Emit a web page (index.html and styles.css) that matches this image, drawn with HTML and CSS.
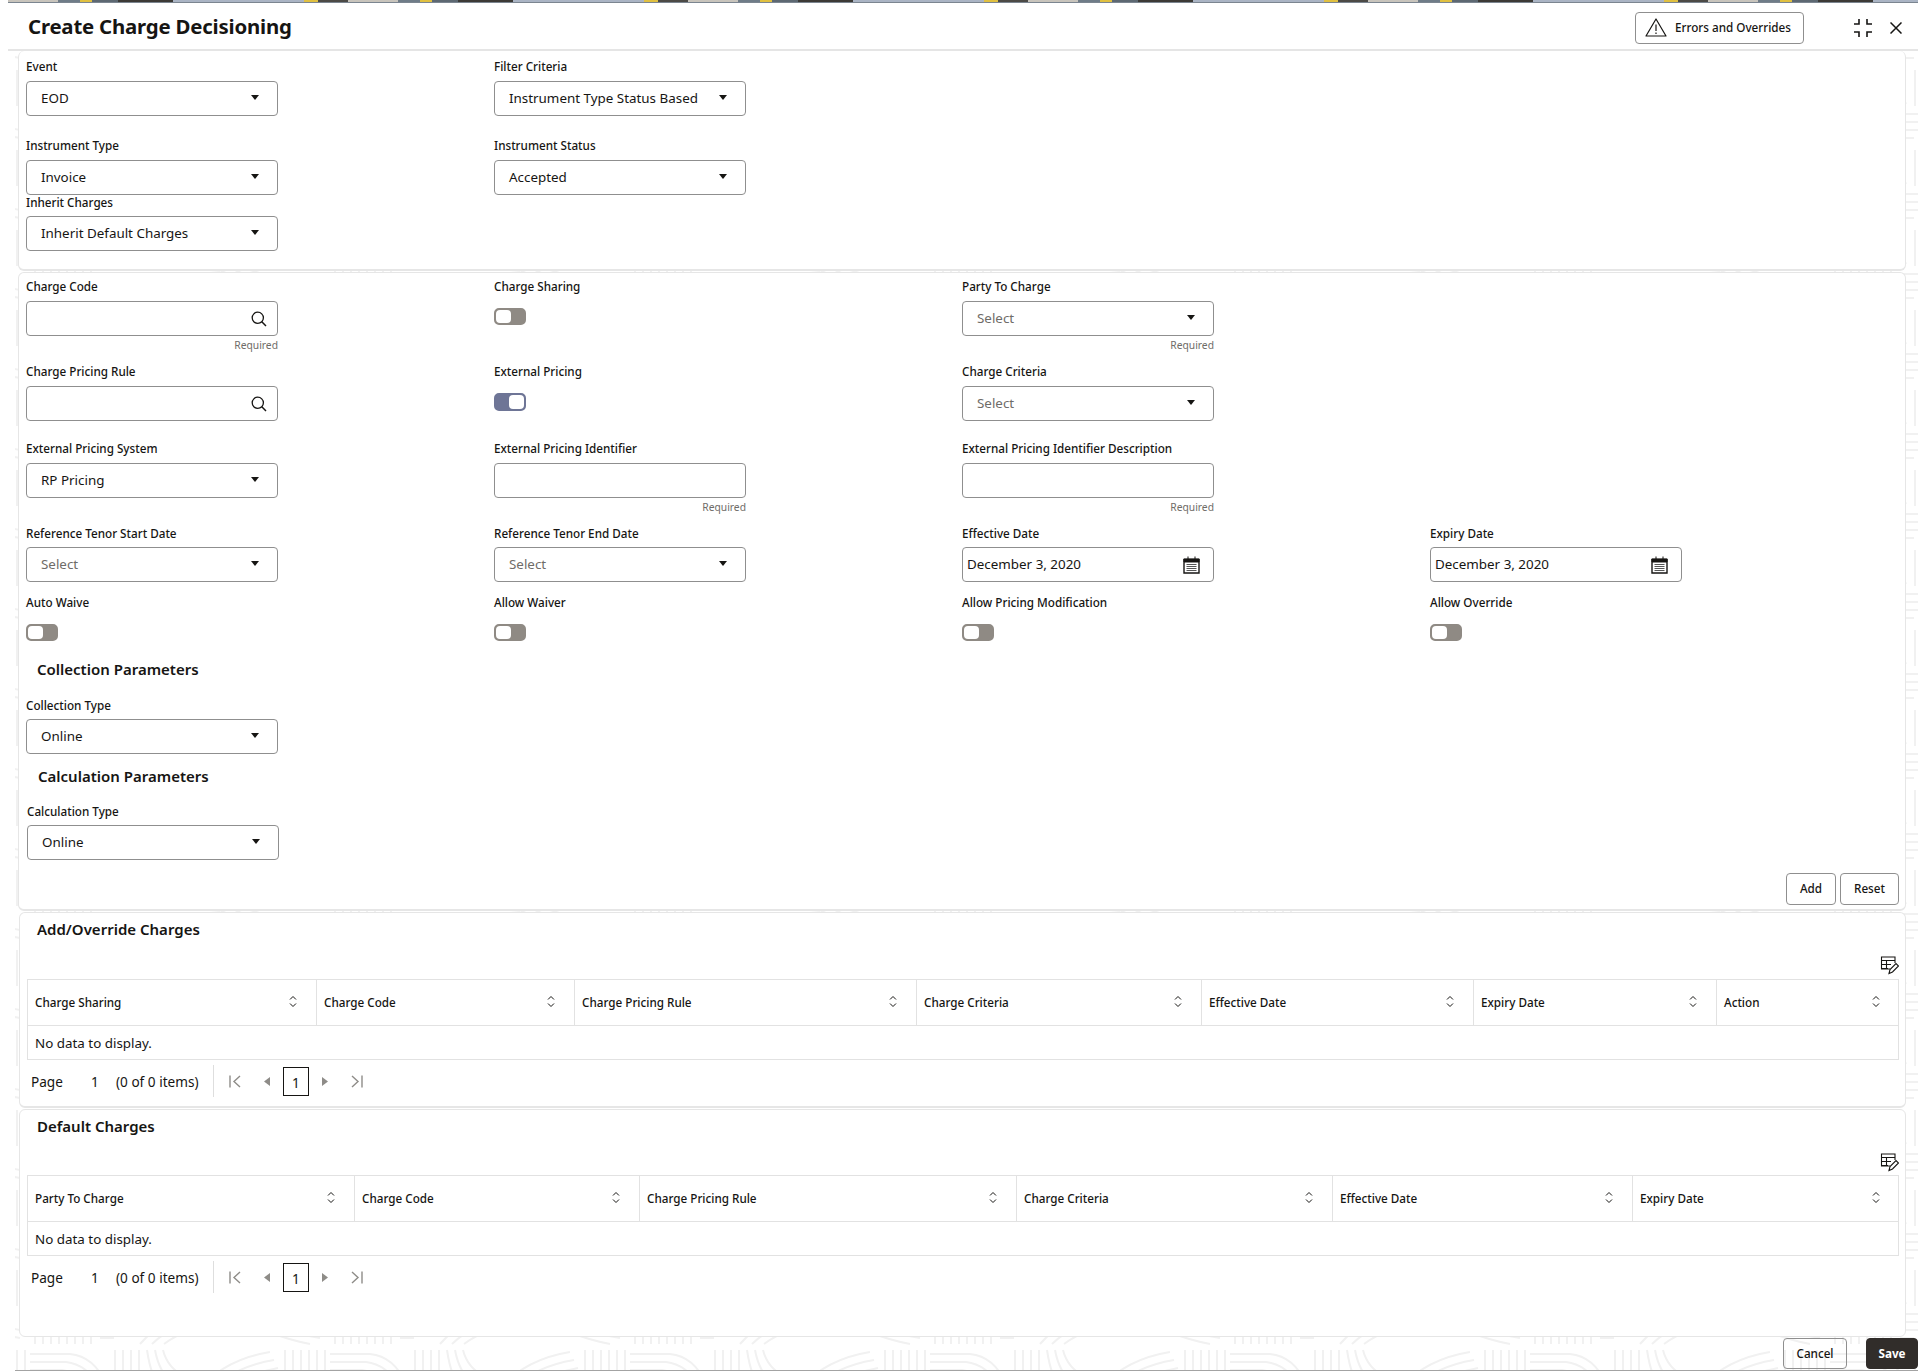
FILE: index.html
```html
<!DOCTYPE html>
<html lang="en">
<head>
<meta charset="utf-8">
<title>Create Charge Decisioning</title>
<link rel="stylesheet" href="styles.css">
</head>
<body>
<div class="page">
  <div class="strip"></div>
  <header class="dlg-head">
    <h1 class="title">Create Charge Decisioning</h1>
    <button class="btn btn-errors">
      <svg class="ic-warn" viewBox="0 0 22 19"><path d="M11 1 L21 18 H1 Z" fill="none" stroke="#161513" stroke-width="1.2" stroke-linejoin="round"/><path d="M11 6.5V13M11 14.5V16" stroke="#161513" stroke-width="1.2"/></svg>
      <span>Errors and Overrides</span>
    </button>
    <svg class="ic-shrink" viewBox="0 0 20 20"><path d="M6 1V6H1M14 1V6H19M6 19V14H1M14 19V14H19" fill="none" stroke="#161513" stroke-width="1.6"/></svg>
    <svg class="ic-close" viewBox="0 0 12 12"><path d="M0.5 0.5L11.5 11.5M11.5 0.5L0.5 11.5" stroke="#161513" stroke-width="1.5"/></svg>
  </header>

  <div class="body">
    <svg class="texture" aria-hidden="true">
      <defs>
        <pattern id="waves" width="300" height="80" patternUnits="userSpaceOnUse" x="15" y="59">
          <g fill="none" stroke="#f1f1f1" stroke-width="2">
            <path d="M5 0V34M13 0V34M21 0V34M29 0V34M37 0V34M45 0V34M53 0V34M61 0V34"/>
            <path d="M70 4H110M70 12H100M70 20H90M70 28H84"/>
            <path d="M110 34C130 10 160 4 190 2M122 34C140 16 165 10 190 8M134 34C150 22 170 16 190 14"/>
            <path d="M190 0C220 16 250 28 280 34M205 0C230 12 255 22 290 28M220 0C245 8 265 16 300 22"/>
            <path d="M0 44H40C60 46 70 60 76 74M0 52H36C52 54 62 64 68 76M0 60H32C44 62 54 68 60 78"/>
            <path d="M85 40V76M93 40V76M101 40V76M109 40V76M117 40C120 60 124 70 132 76M125 40C128 56 134 66 142 72M133 40C136 52 142 60 154 66"/>
            <path d="M170 78C190 56 215 46 240 42M184 78C200 62 220 54 244 50M198 78C212 68 226 62 248 58"/>
            <path d="M255 40V76M263 40V76M271 40V76M279 40V76M287 40V76M295 40V76"/>
          </g>
        </pattern>
      </defs>
      <rect width="100%" height="100%" fill="url(#waves)"/>
    </svg>

    <section class="panel panel-a">
      <div class="row row-first">
        <div class="field"><label class="lbl lbl-tight">Event</label><div class="ctl"><span>EOD</span><i class="caret"></i></div></div>
        <div class="field"><label class="lbl lbl-tight">Filter Criteria</label><div class="ctl"><span>Instrument Type Status Based</span><i class="caret"></i></div></div>
      </div>
      <div class="row row-2">
        <div class="field"><label class="lbl lbl-tight">Instrument Type</label><div class="ctl"><span>Invoice</span><i class="caret"></i></div></div>
        <div class="field"><label class="lbl lbl-tight">Instrument Status</label><div class="ctl"><span>Accepted</span><i class="caret"></i></div></div>
      </div>
      <div class="row">
        <div class="field"><label class="lbl lbl-tighter">Inherit Charges</label><div class="ctl"><span>Inherit Default Charges</span><i class="caret"></i></div></div>
      </div>
    </section>

    <section class="panel panel-b">
      <div class="row">
        <div class="field"><label class="lbl lbl-tight">Charge Code</label><div class="ctl"><svg class="ic-search" viewBox="0 0 16 16"><circle cx="6.8" cy="6.8" r="5.6" fill="none" stroke="#161513" stroke-width="1.3"/><path d="M10.8 10.8L15 15" stroke="#161513" stroke-width="1.5"/></svg></div><div class="hint">Required</div></div>
        <div class="field"><label class="lbl lbl-toggle">Charge Sharing</label><div class="tog"></div></div>
        <div class="field"><label class="lbl lbl-tight">Party To Charge</label><div class="ctl"><span class="ph">Select</span><i class="caret"></i></div><div class="hint">Required</div></div>
      </div>
      <div class="row row-pricing">
        <div class="field"><label class="lbl lbl-tight">Charge Pricing Rule</label><div class="ctl"><svg class="ic-search" viewBox="0 0 16 16"><circle cx="6.8" cy="6.8" r="5.6" fill="none" stroke="#161513" stroke-width="1.3"/><path d="M10.8 10.8L15 15" stroke="#161513" stroke-width="1.5"/></svg></div></div>
        <div class="field"><label class="lbl lbl-toggle">External Pricing</label><div class="tog tog-on"></div></div>
        <div class="field"><label class="lbl lbl-tight">Charge Criteria</label><div class="ctl"><span class="ph">Select</span><i class="caret"></i></div></div>
      </div>
      <div class="row row-system">
        <div class="field"><label class="lbl lbl-tight">External Pricing System</label><div class="ctl"><span>RP Pricing</span><i class="caret"></i></div></div>
        <div class="field"><label class="lbl lbl-tight">External Pricing Identifier</label><div class="ctl"></div><div class="hint">Required</div></div>
        <div class="field"><label class="lbl lbl-tight">External Pricing Identifier Description</label><div class="ctl"></div><div class="hint">Required</div></div>
      </div>
      <div class="row row-tenor">
        <div class="field"><label class="lbl lbl-tighter">Reference Tenor Start Date</label><div class="ctl"><span class="ph">Select</span><i class="caret"></i></div></div>
        <div class="field"><label class="lbl lbl-tighter">Reference Tenor End Date</label><div class="ctl"><span class="ph">Select</span><i class="caret"></i></div></div>
        <div class="field"><label class="lbl lbl-tighter">Effective Date</label><div class="ctl ctl-date"><span>December 3, 2020</span><svg class="ic-cal" viewBox="0 0 17 18"><path d="M1 3.5H16V17H1Z" fill="none" stroke="#161513" stroke-width="1.4"/><path d="M1 3H16V6H1ZM5 0.5V4M12 0.5V4" fill="#161513" stroke="#161513"/><path d="M3.5 8.5H13.5M3.5 10.5H13.5M3.5 12.5H13.5M3.5 14.5H13.5" stroke="#555" stroke-width="1.2"/></svg></div></div>
        <div class="field"><label class="lbl lbl-tighter">Expiry Date</label><div class="ctl ctl-date"><span>December 3, 2020</span><svg class="ic-cal" viewBox="0 0 17 18"><path d="M1 3.5H16V17H1Z" fill="none" stroke="#161513" stroke-width="1.4"/><path d="M1 3H16V6H1ZM5 0.5V4M12 0.5V4" fill="#161513" stroke="#161513"/><path d="M3.5 8.5H13.5M3.5 10.5H13.5M3.5 12.5H13.5M3.5 14.5H13.5" stroke="#555" stroke-width="1.2"/></svg></div></div>
      </div>
      <div class="row row-waive">
        <div class="field"><label class="lbl lbl-toggle">Auto Waive</label><div class="tog"></div></div>
        <div class="field"><label class="lbl lbl-toggle">Allow Waiver</label><div class="tog"></div></div>
        <div class="field"><label class="lbl lbl-toggle">Allow Pricing Modification</label><div class="tog"></div></div>
        <div class="field"><label class="lbl lbl-toggle">Allow Override</label><div class="tog"></div></div>
      </div>
      <h2 class="sub sub-coll">Collection Parameters</h2>
      <div class="row row-coll">
        <div class="field"><label class="lbl lbl-tighter">Collection Type</label><div class="ctl"><span>Online</span><i class="caret"></i></div></div>
      </div>
      <h2 class="sub sub-calc">Calculation Parameters</h2>
      <div class="row row-calc">
        <div class="field"><label class="lbl lbl-tighter">Calculation Type</label><div class="ctl"><span>Online</span><i class="caret"></i></div></div>
      </div>
      <div class="actions">
        <button class="btn btn-add">Add</button>
        <button class="btn btn-reset">Reset</button>
      </div>
    </section>

    <section class="panel panel-c">
      <h2 class="sub sub-table">Add/Override Charges</h2>
      <div class="tools"><svg class="ic-tbl" viewBox="0 0 19 19"><path d="M10 13H1.5V1H15V7M1.5 4.5H15M1.5 8.5H11M1.5 12.5H8M6.5 4.5V13" fill="none" stroke="#161513" stroke-width="1.1"/><path d="M9 17.5L10 13.5L16 7.5L18.5 10L12.5 16Z" fill="#fff" stroke="#161513" stroke-width="1.1"/></svg></div>
      <div class="tbl tbl-over">
        <div class="th">Charge Sharing<svg class="ic-sort" viewBox="0 0 8 13"><path d="M1 4.5L4 1.5L7 4.5M1 8.5L4 11.5L7 8.5" fill="none" stroke="#161513"/></svg></div>
        <div class="th">Charge Code<svg class="ic-sort" viewBox="0 0 8 13"><path d="M1 4.5L4 1.5L7 4.5M1 8.5L4 11.5L7 8.5" fill="none" stroke="#161513"/></svg></div>
        <div class="th">Charge Pricing Rule<svg class="ic-sort" viewBox="0 0 8 13"><path d="M1 4.5L4 1.5L7 4.5M1 8.5L4 11.5L7 8.5" fill="none" stroke="#161513"/></svg></div>
        <div class="th">Charge Criteria<svg class="ic-sort" viewBox="0 0 8 13"><path d="M1 4.5L4 1.5L7 4.5M1 8.5L4 11.5L7 8.5" fill="none" stroke="#161513"/></svg></div>
        <div class="th">Effective Date<svg class="ic-sort" viewBox="0 0 8 13"><path d="M1 4.5L4 1.5L7 4.5M1 8.5L4 11.5L7 8.5" fill="none" stroke="#161513"/></svg></div>
        <div class="th">Expiry Date<svg class="ic-sort" viewBox="0 0 8 13"><path d="M1 4.5L4 1.5L7 4.5M1 8.5L4 11.5L7 8.5" fill="none" stroke="#161513"/></svg></div>
        <div class="th">Action<svg class="ic-sort" viewBox="0 0 8 13"><path d="M1 4.5L4 1.5L7 4.5M1 8.5L4 11.5L7 8.5" fill="none" stroke="#161513"/></svg></div>
        <div class="empty">No data to display.</div>
      </div>
      <div class="pager">
        <span class="pg-page">Page</span><span class="pg-num">1</span><span class="pg-count">(0 of 0 items)</span>
        <span class="pg-div"></span>
        <svg class="pg-first" viewBox="0 0 12 13"><path d="M1 0.5V12.5" stroke="#8e8c88" stroke-width="1.4"/><path d="M11 1L5 6.5L11 12" fill="none" stroke="#8e8c88" stroke-width="1.4"/></svg>
        <svg class="pg-prev" viewBox="0 0 6 9"><path d="M6 0V9L0 4.5Z" fill="#8e8c88"/></svg>
        <span class="pg-box">1</span>
        <svg class="pg-next" viewBox="0 0 6 9"><path d="M0 0V9L6 4.5Z" fill="#8e8c88"/></svg>
        <svg class="pg-last" viewBox="0 0 12 13"><path d="M1 1L7 6.5L1 12" fill="none" stroke="#8e8c88" stroke-width="1.4"/><path d="M11 0.5V12.5" stroke="#8e8c88" stroke-width="1.4"/></svg>
      </div>
    </section>

    <section class="panel panel-d">
      <h2 class="sub sub-table">Default Charges</h2>
      <div class="tools tools-d"><svg class="ic-tbl" viewBox="0 0 19 19"><path d="M10 13H1.5V1H15V7M1.5 4.5H15M1.5 8.5H11M1.5 12.5H8M6.5 4.5V13" fill="none" stroke="#161513" stroke-width="1.1"/><path d="M9 17.5L10 13.5L16 7.5L18.5 10L12.5 16Z" fill="#fff" stroke="#161513" stroke-width="1.1"/></svg></div>
      <div class="tbl tbl-def">
        <div class="th">Party To Charge<svg class="ic-sort" viewBox="0 0 8 13"><path d="M1 4.5L4 1.5L7 4.5M1 8.5L4 11.5L7 8.5" fill="none" stroke="#161513"/></svg></div>
        <div class="th">Charge Code<svg class="ic-sort" viewBox="0 0 8 13"><path d="M1 4.5L4 1.5L7 4.5M1 8.5L4 11.5L7 8.5" fill="none" stroke="#161513"/></svg></div>
        <div class="th">Charge Pricing Rule<svg class="ic-sort" viewBox="0 0 8 13"><path d="M1 4.5L4 1.5L7 4.5M1 8.5L4 11.5L7 8.5" fill="none" stroke="#161513"/></svg></div>
        <div class="th">Charge Criteria<svg class="ic-sort" viewBox="0 0 8 13"><path d="M1 4.5L4 1.5L7 4.5M1 8.5L4 11.5L7 8.5" fill="none" stroke="#161513"/></svg></div>
        <div class="th">Effective Date<svg class="ic-sort" viewBox="0 0 8 13"><path d="M1 4.5L4 1.5L7 4.5M1 8.5L4 11.5L7 8.5" fill="none" stroke="#161513"/></svg></div>
        <div class="th">Expiry Date<svg class="ic-sort" viewBox="0 0 8 13"><path d="M1 4.5L4 1.5L7 4.5M1 8.5L4 11.5L7 8.5" fill="none" stroke="#161513"/></svg></div>
        <div class="empty">No data to display.</div>
      </div>
      <div class="pager">
        <span class="pg-page">Page</span><span class="pg-num">1</span><span class="pg-count">(0 of 0 items)</span>
        <span class="pg-div"></span>
        <svg class="pg-first" viewBox="0 0 12 13"><path d="M1 0.5V12.5" stroke="#8e8c88" stroke-width="1.4"/><path d="M11 1L5 6.5L11 12" fill="none" stroke="#8e8c88" stroke-width="1.4"/></svg>
        <svg class="pg-prev" viewBox="0 0 6 9"><path d="M6 0V9L0 4.5Z" fill="#8e8c88"/></svg>
        <span class="pg-box">1</span>
        <svg class="pg-next" viewBox="0 0 6 9"><path d="M0 0V9L6 4.5Z" fill="#8e8c88"/></svg>
        <svg class="pg-last" viewBox="0 0 12 13"><path d="M1 1L7 6.5L1 12" fill="none" stroke="#8e8c88" stroke-width="1.4"/><path d="M11 0.5V12.5" stroke="#8e8c88" stroke-width="1.4"/></svg>
      </div>
    </section>

    <footer class="foot">
      <button class="btn btn-cancel">Cancel</button>
      <button class="btn btn-save">Save</button>
    </footer>
  </div>
</div>
</body>
</html>
```

FILE: styles.css
```css
* { box-sizing: border-box; }
html, body { margin: 0; padding: 0; background: #fff; }
body { font-family: "Noto Sans", "Open Sans", sans-serif; color: #161513; font-size: 13.4px; }
.page { width: 1918px; height: 1371px; overflow: hidden; }

.strip {
  height: 3px; margin-left: 8px;
  background-color: #6f7c88;
  background-image: repeating-linear-gradient(90deg,
    #c8c4bc 0 50px, #6f7c88 50px 72px, #e0c040 72px 84px, #5d6872 84px 110px,
    #3c3a36 110px 165px, #aab4c4 165px 296px, #e0c040 296px 310px, #4c4a46 310px 340px);
  border-bottom: 1px solid #7b8590;
}

.dlg-head {
  height: 48px; margin-left: 8px; padding: 8px 16px 5px 20px;
  display: flex; align-items: center;
  border-bottom: 2px solid #e5e5e5;
}
.title { margin: -4px auto 0 0; font-size: 20.4px; line-height: 30px; font-weight: 700; letter-spacing: -.2px; }

.btn {
  font: 500 11.7px/1 "Noto Sans", sans-serif; color: #161513;
  background: #fff; border: 1px solid #8f8f8f; border-radius: 4px; padding: 0;
  display: inline-flex; align-items: center; justify-content: center;
}
.btn-errors { width: 169px; height: 32px; gap: 8px; margin-right: 49px; justify-content: flex-start; padding-left: 9px; }
.ic-warn { width: 22px; height: 19px; }
.ic-shrink { width: 20px; height: 20px; margin-right: 17px; }
.ic-close { width: 12px; height: 12px; }

.body { position: relative; margin-left: 15px; padding: 0 12px 0 3px; height: 1320px; border-bottom: 1px solid #a3a3a3; }
.texture { position: absolute; left: 0; top: 0; width: 100%; height: 100%; }

.panel { position: relative; background: #fff; border: 1px solid #e6e6e6; border-top: 0; border-bottom: 2px solid #e6e6e6; border-radius: 6px; padding-left: 7px; }
.panel-a { height: 220px; padding-top: 8px; }
.panel-b { height: 639px; margin-top: 1px; padding-top: 6px; border-top: 1px solid #e6e6e6; }
.panel-c { height: 196px; margin: 1px 0 0 1px; padding: 6px 6px 0 7px; border-top: 1px solid #e6e6e6; }
.panel-d { height: 228px; margin: 1px 0 0 1px; padding: 6px 6px 0 7px; border-top: 1px solid #e6e6e6; border-bottom-width: 1px; }

.row { display: grid; grid-template-columns: 468px 468px 468px 468px; }
.row-2 { margin-top: 22px; }
.row-pricing { margin-top: 12px; }
.row-system { margin-top: 20px; }
.row-tenor { margin-top: 12px; }
.row-waive { margin-top: 13px; }
.row-coll { margin-top: 19px; }
.row-calc { margin-top: 18px; margin-left: 1px; }

.field { width: 252px; }
.lbl { display: block; height: 16px; margin-bottom: 7px; font-size: 11.7px; line-height: 14px; font-weight: 500; white-space: nowrap; }
.lbl-tight { margin-bottom: 6px; }
.lbl-tighter { margin-bottom: 5px; }
.lbl-toggle { margin-bottom: 13px; }

.ctl {
  height: 35px; display: flex; align-items: center; justify-content: space-between;
  padding: 0 18px 0 14px; background: #fff; border: 1px solid #8f8f8f; border-radius: 4px; font-size: 13.4px;
}
.ctl > span { margin-top: -1px; white-space: nowrap; }
.ph { color: #6f6c68; }
.ctl-date { padding: 0 13px 0 4px; }
.caret { width: 0; height: 0; margin: -3px 0 0 auto; border: 4.5px solid transparent; border-top: 5px solid #161513; border-bottom: 0; flex: none; }
.ic-search { width: 16px; height: 16px; margin: 0 -8px 0 auto; }
.ic-cal { width: 17px; height: 18px; margin-left: auto; }
.hint { height: 16px; padding-top: 1px; font-size: 10.3px; line-height: 16px; text-align: right; color: #6f6c68; }

.tog { width: 32px; height: 17px; border-radius: 5px; background: #8f8a84; border: 2px solid #8f8a84; position: relative; }
.tog::before { content: ""; position: absolute; left: 0; top: 0; width: 15px; height: 13px; background: #fff; border-radius: 4px; }
.tog-on { background: #6e7596; border-color: #6e7596; height: 18px; }
.tog-on::before { left: auto; right: 0; height: 14px; }

.sub { margin: 0; font-size: 15px; line-height: 20px; font-weight: 600; }
.sub-coll { margin: 18px 0 0 11px; }
.sub-calc { margin: 12px 0 0 12px; }
.sub-table { margin-left: 10px; }

.actions { display: flex; justify-content: flex-end; gap: 4px; margin: 13px 6px 0 0; }
.btn-add { width: 50px; height: 32px; }
.btn-reset { width: 59px; height: 32px; }

.tools { display: flex; justify-content: flex-end; margin-top: 17px; height: 23px; }
.tools-d { height: 22px; }
.ic-tbl { width: 19px; height: 19px; }

.tbl { display: grid; border: 1px solid #e2e2e2; }
.tbl-over { grid-template-columns: 288px 258px 342px 285px 272px 243px 183px; }
.tbl-def { grid-template-columns: 326px 285px 377px 316px 300px 267px; }
.th {
  height: 46px; display: flex; align-items: center; justify-content: space-between;
  padding: 0 19px 2px 7px; font-size: 11.7px; font-weight: 500; white-space: nowrap;
  border-left: 1px solid #e2e2e2; border-bottom: 1px solid #e2e2e2;
}
.th:first-child { border-left: 0; }
.ic-sort { width: 8px; height: 13px; }
.empty { grid-column: 1 / -1; height: 33px; padding-left: 7px; font-size: 13.4px; line-height: 35px; }

.pager { display: flex; align-items: center; height: 42px; padding-left: 4px; font-size: 13.6px; position: relative; }
.pg-page { width: 60px; }
.pg-num { width: 25px; }
.pg-count { width: 97px; white-space: nowrap; }
.pg-div { width: 1px; height: 32px; background: #dedede; }
.pg-first { width: 12px; height: 13px; margin-left: 15px; }
.pg-prev { width: 6px; height: 9px; margin-left: 23px; }
.pg-box { width: 26px; height: 29px; margin-left: 13px; border: 1px solid #161513; text-align: center; line-height: 30px; }
.pg-next { width: 6px; height: 9px; margin-left: 13px; }
.pg-last { width: 12px; height: 13px; margin-left: 23px; }

.foot { position: relative; display: flex; justify-content: flex-end; align-items: flex-start; height: 32px; margin-right: -12px; padding-top: 1px; gap: 19px; }
.btn-cancel { width: 64px; height: 31px; background: transparent; }
.btn-save { width: 52px; height: 31px; color: #fff; background: #312d2a; border-color: #312d2a; font-weight: 700; }
```
